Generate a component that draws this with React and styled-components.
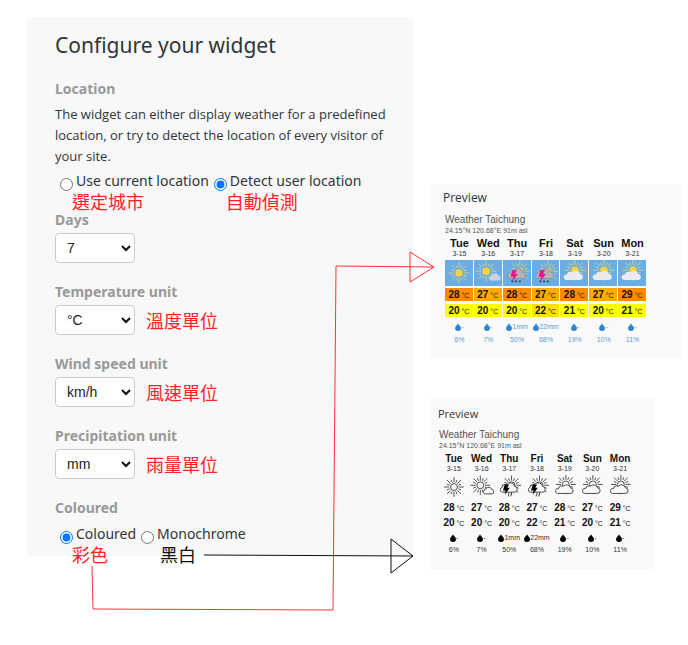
import React from 'react';
import styled, { createGlobalStyle } from 'styled-components';

const GlobalStyle = createGlobalStyle`
  *, *::before, *::after { box-sizing: border-box; }
  body {
    margin: 0;
    background: #fff;
    color: #303538;
    font-family: "Noto Sans", "Noto Sans CJK TC", sans-serif;
  }
`;

const Page = styled.main`
  position: relative;
  display: grid;
  grid-template-columns: minmax(0, 386fr) minmax(0, 251fr);
  column-gap: 18px;
  align-items: start;
  padding: 17px 6px 76px 27px;
`;

const ConfigPanel = styled.form`
  padding: 12px 26px 11px 28px;
  background: #f8f8f8;
`;

const Title = styled.h1`
  margin: 0 0 19px;
  font-size: 21px;
  line-height: 32px;
  font-weight: 400;
`;

const Group = styled.fieldset`
  margin: 0 0 ${(p) => p.$gap || 0}px;
  padding: 0;
  border: 0;
  min-width: 0;
`;

const groupTitle = `
  display: block;
  padding: 0;
  font-size: 14px;
  line-height: 18px;
  font-weight: 700;
  color: #999;
`;

const Legend = styled.legend`${groupTitle}`;
const FieldLabel = styled.label`${groupTitle}`;

const Help = styled.p`
  margin: 6px 0 3px;
  font-family: "Open Sans", sans-serif;
  font-size: 13px;
  line-height: 21px;
`;

const Options = styled.div`
  display: flex;
  gap: 5px;
  margin-top: ${(p) => p.$gap || 0}px;
  padding-left: 5px;
`;

const Option = styled.label`
  position: relative;
  display: flex;
  align-items: center;
  gap: 3px;
  min-height: 22px;
  font-size: 14px;
  line-height: 20px;
  white-space: nowrap;
`;

const Radio = styled.input.attrs({ type: 'radio' })`
  width: 13px;
  height: 13px;
  margin: 6px 0 0;
  accent-color: #0075ff;
`;

const Note = styled.span`
  font-family: "Noto Sans CJK TC", sans-serif;
  font-size: 18px;
  line-height: 18px;
  color: ${(p) => (p.$dark ? '#111' : '#ff2222')};
`;

const NoteBelow = styled(Note)`
  position: absolute;
  top: 22px;
  left: ${(p) => (p.$dark ? 19 : 12)}px;
`;

const Field = styled.div`
  margin-bottom: 20px;
`;

const FieldRow = styled.div`
  display: flex;
  align-items: center;
  gap: 11px;
  margin-top: 4px;
`;

const SelectBox = styled.span`
  position: relative;
  display: block;
  width: 80px;
  svg {
    position: absolute;
    right: 4px;
    top: 11px;
    pointer-events: none;
  }
`;

const Select = styled.select`
  appearance: none;
  display: block;
  width: 100%;
  height: 30px;
  padding: 0 20px 0 11px;
  border: 1px solid #ccc;
  border-radius: 4px;
  background: #fff;
  color: #222;
  font: 14px "Liberation Sans", sans-serif;
`;

const Previews = styled.div`
  display: grid;
  row-gap: 40px;
  padding-top: 167px;
`;

const PreviewCard = styled.section`
  margin-right: ${(p) => (p.$mono ? 27 : 0)}px;
  padding: ${(p) => (p.$mono ? '6px 21px 13px 7px' : '4px 35px 11px 12px')};
  background: #f9f9f9;
`;

const PreviewTitle = styled.h2`
  margin: 0 0 ${(p) => (p.$mono ? 4 : 5)}px;
  font-family: "Open Sans", sans-serif;
  font-size: ${(p) => (p.$mono ? 11 : 12)}px;
  line-height: 20px;
  font-weight: 400;
`;

const Place = styled.h3`
  margin: 0 0 0 ${(p) => (p.$mono ? 1 : 2)}px;
  font: 400 10px/13px "Liberation Sans", sans-serif;
  color: #555;
`;

const Coordinates = styled.p`
  margin: 0 0 0 ${(p) => (p.$mono ? 1 : 2)}px;
  font: 7px/9px "Liberation Sans", sans-serif;
  color: #555;
  white-space: nowrap;
`;

const Forecast = styled.table`
  width: calc(100% - 2px);
  margin: 3px 0 0 2px;
  border-collapse: collapse;
  table-layout: fixed;
  font-family: "Liberation Sans", sans-serif;
  text-align: center;
  color: ${(p) => (p.$mono ? '#333' : '#5d9bd3')};
  th, td { padding: 0; white-space: nowrap; }
`;

const DayCell = styled.th`
  font-size: ${(p) => (p.$mono ? 10 : 11)}px;
  line-height: 11px;
  font-weight: 700;
  color: #111;
  time {
    display: block;
    font-size: 7px;
    line-height: 9px;
    font-weight: 400;
    color: #333;
  }
`;

const Tile = styled.div`
  display: flex;
  justify-content: center;
  align-items: center;
  height: 26px;
  margin: ${(p) => (p.$mono ? '1px 0' : '2px 1px 2px 0')};
  background: ${(p) => (p.$mono ? 'transparent' : '#6aade4')};
`;

const Temp = styled.div`
  height: 13px;
  margin: ${(p) => (p.$mono ? '0 0 2px' : '0 1px 3px 0')};
  font-size: 10px;
  line-height: 13px;
  font-weight: 700;
  color: #111;
  background: ${(p) => p.$fill};
  small {
    font-size: 7px;
    font-weight: 400;
  }
`;

const Rain = styled.div`
  display: flex;
  align-items: center;
  justify-content: center;
  height: 13px;
  font-size: 7px;
`;

const Chance = styled.div`
  font-size: 7px;
  line-height: ${(p) => (p.$mono ? 12 : 14)}px;
`;

const Connectors = styled.svg`
  position: absolute;
  top: 0;
  left: 0;
  pointer-events: none;
`;

const CLOUDS = {
  light: 'M17 22h8a2.500 2.500 0 0 0 .5-5a3.600 3.600 0 0 0-6.500-1a2.600 2.600 0 0 0-2.500 2a2.200 2.200 0 0 0 .5 4z',
  cloud: 'M5 21.500h15a3.200 3.200 0 0 0 .5-6.400a5 5 0 0 0-8.500-2a3.800 3.800 0 0 0-5.500 2.600a3 3 0 0 0-1.500 5.800z',
  storm: 'M6 20h14a3.300 3.300 0 0 0 .5-6.600a5.200 5.200 0 0 0-9.500-2a4 4 0 0 0-5 3a2.900 2.900 0 0 0 0 5.600z',
};

const SUNS = { sun: [14, 14], light: [12, 12], cloud: [15, 11], storm: [17, 12] };

function Rays({ cx, cy, color }) {
  const angles = Array.from({ length: 16 }, (_, i) => (i * Math.PI) / 8);
  return (
    <g stroke={color} strokeWidth="1" strokeLinecap="round">
      {angles.map((a, i) => {
        const end = i % 2 ? 8.5 : 11;
        return (
          <line
            key={a}
            x1={cx + Math.cos(a) * 6}
            y1={cy + Math.sin(a) * 6}
            x2={cx + Math.cos(a) * end}
            y2={cy + Math.sin(a) * end}
          />
        );
      })}
    </g>
  );
}

function WeatherIcon({ kind, mono }) {
  const size = mono ? 24 : 26;
  const [cx, cy] = SUNS[kind];
  const storm = kind === 'storm';
  const colourFill = { light: '#cdd1dd', cloud: '#e9ebee', storm: '#b1b3b8' }[kind];
  return (
    <svg width={size} height={size} viewBox="0 0 28 28" role="img" aria-label={kind}>
      <Rays cx={cx} cy={cy} color={mono ? '#333' : '#d5d08c'} />
      <circle cx={cx} cy={cy} r="4" fill={mono ? '#f9f9f9' : '#ffd23c'} stroke={mono ? '#333' : 'none'} />
      {CLOUDS[kind] && (
        <path
          d={CLOUDS[kind]}
          fill={mono ? '#f9f9f9' : colourFill}
          stroke={mono ? '#333' : storm ? '#8b8f96' : 'none'}
        />
      )}
      {storm && (
        <>
          <path d="M9 11h5l-2 4h3l-6 8l1-5h-3z" fill={mono ? '#000' : '#ec1590'} />
          <path
            d={mono ? 'M14 21l-1 4M17 21l-1 4' : 'M9 22v2M13 22v2M17 22v2'}
            stroke={mono ? '#333' : '#33384c'}
            strokeWidth={mono ? 1 : 2}
          />
        </>
      )}
    </svg>
  );
}

const HOT = '#ff8c00';
const WARM = '#ffaa00';
const YELLOW = '#ffff00';

const DAYS = [
  { day: 'Tue', date: '3-15', icon: 'sun', high: 28, low: 20, rain: '-', chance: 6 },
  { day: 'Wed', date: '3-16', icon: 'light', high: 27, low: 20, rain: '-', chance: 7 },
  { day: 'Thu', date: '3-17', icon: 'storm', high: 28, low: 20, rain: '1mm', chance: 50 },
  { day: 'Fri', date: '3-18', icon: 'storm', high: 27, low: 22, rain: '22mm', chance: 68 },
  { day: 'Sat', date: '3-19', icon: 'cloud', high: 28, low: 21, rain: '-', chance: 19 },
  { day: 'Sun', date: '3-20', icon: 'cloud', high: 27, low: 20, rain: '-', chance: 10 },
  { day: 'Mon', date: '3-21', icon: 'cloud', high: 29, low: 21, rain: '-', chance: 11 },
];

function Preview({ mono }) {
  const highFill = (t) => (mono ? 'transparent' : t > 27 ? HOT : WARM);
  const lowFill = (t) => (mono ? 'transparent' : t > 21 ? '#ffe100' : YELLOW);
  return (
    <PreviewCard $mono={mono}>
      <PreviewTitle $mono={mono}>Preview</PreviewTitle>
      <Place $mono={mono}>Weather Taichung</Place>
      <Coordinates $mono={mono}>24.15°N 120.68°E 91m asl</Coordinates>
      <Forecast $mono={mono}>
        <thead>
          <tr>
            {DAYS.map((d) => (
              <DayCell key={d.day} scope="col" $mono={mono}>{d.day}<time>{d.date}</time></DayCell>
            ))}
          </tr>
        </thead>
        <tbody>
          <tr>
            {DAYS.map((d) => (
              <td key={d.day}><Tile $mono={mono}><WeatherIcon kind={d.icon} mono={mono} /></Tile></td>
            ))}
          </tr>
          <tr>
            {DAYS.map((d) => (
              <td key={d.day}><Temp $mono={mono} $fill={highFill(d.high)}>{d.high}<small> °C</small></Temp></td>
            ))}
          </tr>
          <tr>
            {DAYS.map((d) => (
              <td key={d.day}><Temp $mono={mono} $fill={lowFill(d.low)}>{d.low}<small> °C</small></Temp></td>
            ))}
          </tr>
          <tr>
            {DAYS.map((d) => (
              <td key={d.day}>
                <Rain>
                  <svg width="6" height="8" viewBox="0 0 6 8" aria-hidden="true">
                    <path d="M3 0C3 2 0 3 0 5a3 3 0 0 0 6 0C6 3 3 2 3 0z" fill={mono ? '#000' : '#2e86d0'} />
                  </svg>
                  {d.rain}
                </Rain>
              </td>
            ))}
          </tr>
          <tr>
            {DAYS.map((d) => (
              <td key={d.day}><Chance $mono={mono}>{d.chance}%</Chance></td>
            ))}
          </tr>
        </tbody>
      </Forecast>
    </PreviewCard>
  );
}

function SelectField({ id, label, options, note }) {
  return (
    <Field>
      <FieldLabel htmlFor={id}>{label}</FieldLabel>
      <FieldRow>
        <SelectBox>
          <Select id={id} defaultValue={options[0]}>
            {options.map((o) => <option key={o}>{o}</option>)}
          </Select>
          <svg width="10" height="8" viewBox="0 0 10 8" aria-hidden="true">
            <path d="M1 2l4 4l4-4" fill="none" stroke="#111" strokeWidth="2" />
          </svg>
        </SelectBox>
        {note && <Note>{note}</Note>}
      </FieldRow>
    </Field>
  );
}

export default function App() {
  return (
    <>
      <GlobalStyle />
      <Page>
        <ConfigPanel>
          <Title>Configure your widget</Title>
          <Group $gap={19}>
            <Legend>Location</Legend>
            <Help>
              The widget can either display weather for a predefined location, or try to
              detect the location of every visitor of your site.
            </Help>
            <Options>
              <Option>
                <Radio name="location" />Use current location
                <NoteBelow>選定城市</NoteBelow>
              </Option>
              <Option>
                <Radio name="location" defaultChecked />Detect user location
                <NoteBelow>自動偵測</NoteBelow>
              </Option>
            </Options>
          </Group>
          <SelectField id="days" label="Days" options={['7', '6', '5', '4']} />
          <SelectField id="temperature" label="Temperature unit" options={['°C', '°F']} note="溫度單位" />
          <SelectField id="wind" label="Wind speed unit" options={['km/h', 'm/s', 'mph']} note="風速單位" />
          <SelectField id="precipitation" label="Precipitation unit" options={['mm', 'inch']} note="雨量單位" />
          <Group>
            <Legend>Coloured</Legend>
            <Options $gap={6}>
              <Option>
                <Radio name="colour" defaultChecked />Coloured
                <NoteBelow>彩色</NoteBelow>
              </Option>
              <Option>
                <Radio name="colour" />Monochrome
                <NoteBelow $dark>黑白</NoteBelow>
              </Option>
            </Options>
          </Group>
        </ConfigPanel>
        <Previews>
          <Preview />
          <Preview mono />
        </Previews>
        <Connectors width="688" height="645" viewBox="0 0 688 645" fill="none" aria-hidden="true">
          <path d="M92 566L93 609L333 610L336 266L434 267M410 252L434 267L410 282Z" stroke="#f33" />
          <path d="M204 555L413 556M391 539L413 556L391 573Z" stroke="#111" />
        </Connectors>
      </Page>
    </>
  );
}
